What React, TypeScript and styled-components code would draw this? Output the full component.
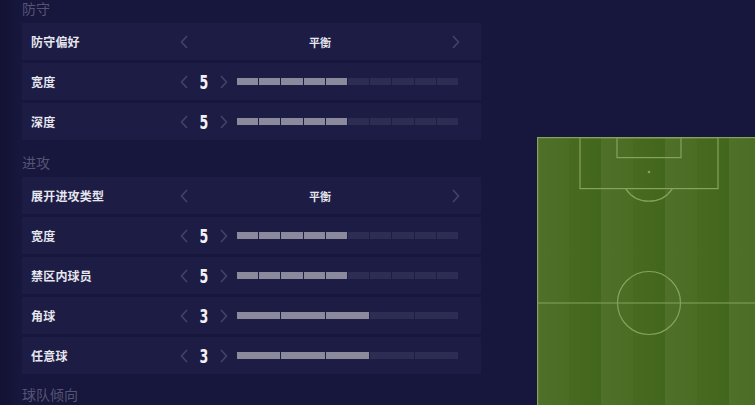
import React from 'react';
import styled, { createGlobalStyle } from 'styled-components';

const GlobalStyle = createGlobalStyle`
  html, body {
    margin: 0;
    padding: 0;
    width: 755px;
    height: 405px;
    overflow: hidden;
    background: #16153a;
  }
  body {
    font-family: "Noto Sans CJK SC", "Noto Sans", sans-serif;
  }
`;

const Page = styled.div`
  display: flex;
  flex-flow: row nowrap;
  align-items: flex-start;
  width: 755px;
  height: 405px;
  overflow: hidden;
  background: linear-gradient(90deg, #131234 0, #17163c 20px, #17163c 100%);
`;

const Column = styled.div`
  display: flex;
  flex-direction: column;
  width: 459px;
  padding-left: 22px;
  flex-shrink: 0;
`;

const Heading = styled.div<{ $top: number }>`
  height: 17px;
  margin-top: ${(p) => p.$top}px;
  margin-bottom: 6px;
  font-size: 14px;
  line-height: 17px;
  color: #545474;
`;

const Rows = styled.div`
  display: flex;
  flex-direction: column;
  gap: 3px;
`;

const Row = styled.div`
  display: flex;
  align-items: center;
  height: 37px;
  padding-left: 9px;
  background: #1d1c45;
`;

const Label = styled.div`
  width: 147px;
  font-size: 12px;
  font-weight: 700;
  color: #e6e6ee;
  letter-spacing: 0.2px;
`;

const Chevron = styled.span`
  display: flex;
  align-items: center;
  justify-content: center;
  width: 12px;
  height: 14px;
  color: #44446a;
`;

const Number = styled.span`
  width: 28px;
  text-align: center;
  font-family: "DejaVu Sans Condensed", "DejaVu Sans", sans-serif;
  font-weight: 700;
  font-size: 20px;
  line-height: 20px;
  transform: scaleX(0.7);
  color: #f2f2f6;
`;

const Choice = styled.div`
  display: flex;
  align-items: center;
  width: 284px;
`;

const ChoiceText = styled.span`
  flex: 1;
  text-align: center;
  font-size: 11px;
  font-weight: 700;
  color: #e6e6ee;
`;

const Bar = styled.div`
  display: flex;
  gap: 1px;
  width: 221px;
  margin-left: 7px;
`;

const Segment = styled.div<{ $on: boolean }>`
  flex: 1;
  height: 7px;
  background: ${(p) => (p.$on ? '#8a8a9c' : '#2d2c52')};
`;

const PitchWrap = styled.div`
  margin-top: 137px;
  margin-left: 56px;
  flex-shrink: 0;
  width: 224px;
  height: 332px;
`;

function Arrow({ dir }: { dir: 'left' | 'right' }) {
  return (
    <Chevron>
      <svg width="8" height="14" viewBox="0 0 8 14" fill="none">
        <path
          d={dir === 'left' ? 'M7 1 L1.5 7 L7 13' : 'M1 1 L6.5 7 L1 13'}
          stroke="currentColor"
          strokeWidth="1.6"
        />
      </svg>
    </Chevron>
  );
}

type Item =
  | { label: string; kind: 'choice'; text: string }
  | { label: string; kind: 'scale'; value: number; steps: number };

function SliderRow({ item }: { item: Item }) {
  return (
    <Row>
      <Label>{item.label}</Label>
      {item.kind === 'choice' ? (
        <Choice>
          <Arrow dir="left" />
          <ChoiceText>{item.text}</ChoiceText>
          <Arrow dir="right" />
        </Choice>
      ) : (
        <>
          <Arrow dir="left" />
          <Number>{item.value}</Number>
          <Arrow dir="right" />
          <Bar>
            {Array.from({ length: item.steps }).map((_, i) => (
              <Segment key={i} $on={i < item.value} />
            ))}
          </Bar>
        </>
      )}
    </Row>
  );
}

function Pitch() {
  const stripes = [0, 1, 2, 3, 4, 5, 6];
  const line = '#86a35c';
  return (
    <PitchWrap>
      <svg width="224" height="332" viewBox="0 0 224 332">
        <defs>
          <linearGradient id="stripeA" x1="0" x2="1" y1="0" y2="0">
            <stop offset="0" stopColor="#4f7029" />
            <stop offset="1" stopColor="#4a6c23" />
          </linearGradient>
          <linearGradient id="stripeB" x1="0" x2="1" y1="0" y2="0">
            <stop offset="0" stopColor="#476920" />
            <stop offset="1" stopColor="#43661d" />
          </linearGradient>
        </defs>
        {stripes.map((i) => (
          <rect
            key={i}
            x={i * 32}
            y={0}
            width={32}
            height={332}
            fill={i % 2 === 0 ? 'url(#stripeA)' : 'url(#stripeB)'}
          />
        ))}
        <g stroke={line} strokeWidth="1.2" fill="none">
          <rect x="0.6" y="0.6" width="240" height="340" />
          <rect x="43" y="0.6" width="138" height="51" />
          <rect x="80" y="0.6" width="64" height="20" />
          <path d="M88.6 51.6 A28 28 0 0 0 135.4 51.6" />
          <line x1="0" y1="166" x2="224" y2="166" />
          <circle cx="112" cy="166" r="31.5" />
        </g>
        <circle cx="112" cy="35" r="1.3" fill={line} />
      </svg>
    </PitchWrap>
  );
}

const defence: Item[] = [
  { label: '防守偏好', kind: 'choice', text: '平衡' },
  { label: '宽度', kind: 'scale', value: 5, steps: 10 },
  { label: '深度', kind: 'scale', value: 5, steps: 10 },
];

const attack: Item[] = [
  { label: '展开进攻类型', kind: 'choice', text: '平衡' },
  { label: '宽度', kind: 'scale', value: 5, steps: 10 },
  { label: '禁区内球员', kind: 'scale', value: 5, steps: 10 },
  { label: '角球', kind: 'scale', value: 3, steps: 5 },
  { label: '任意球', kind: 'scale', value: 3, steps: 5 },
];

export default function App() {
  return (
    <>
      <GlobalStyle />
      <Page>
        <Column>
          <Heading $top={0}>防守</Heading>
          <Rows>
            {defence.map((it, i) => (
              <SliderRow key={i} item={it} />
            ))}
          </Rows>
          <Heading $top={14}>进攻</Heading>
          <Rows>
            {attack.map((it, i) => (
              <SliderRow key={i} item={it} />
            ))}
          </Rows>
          <Heading $top={12}>球队倾向</Heading>
        </Column>
        <Pitch />
      </Page>
    </>
  );
}
